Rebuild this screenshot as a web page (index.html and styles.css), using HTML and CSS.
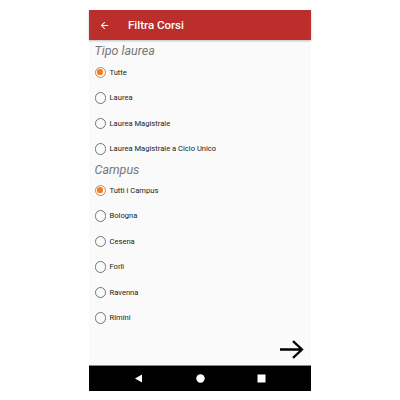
FILE: index.html
```html
<!DOCTYPE html>
<html>
<head>
<meta charset="utf-8">
<link rel="stylesheet" href="styles.css">
</head>
<body>
<div class="phone">
  <header class="appbar">
    <svg class="back" width="11" height="11" viewBox="0 0 24 24"><path d="M20 11H7.83l5.59-5.59L12 4l-8 8 8 8 1.41-1.41L7.83 13H20v-2z" fill="#fff"/></svg>
    <span class="title">Filtra Corsi</span>
  </header>
  <main class="content">
    <div class="section first">Tipo laurea</div>
    <div class="row"><span class="radio on"></span><span class="label">Tutte</span></div>
    <div class="row"><span class="radio"></span><span class="label">Laurea</span></div>
    <div class="row"><span class="radio"></span><span class="label">Laurea Magistrale</span></div>
    <div class="row"><span class="radio"></span><span class="label">Laurea Magistrale a Ciclo Unico</span></div>
    <div class="section">Campus</div>
    <div class="row"><span class="radio on"></span><span class="label">Tutti i Campus</span></div>
    <div class="row"><span class="radio"></span><span class="label">Bologna</span></div>
    <div class="row"><span class="radio"></span><span class="label">Cesena</span></div>
    <div class="row"><span class="radio"></span><span class="label">Forlì</span></div>
    <div class="row"><span class="radio"></span><span class="label">Ravenna</span></div>
    <div class="row"><span class="radio"></span><span class="label">Rimini</span></div>
    <svg class="next" width="25" height="19" viewBox="0 0 25 19"><path d="M1 9.5H23M14 1.2L23 9.5L14 17.8" fill="none" stroke="#000" stroke-width="2.3"/></svg>
  </main>
  <nav class="navbar">
    <svg width="9" height="9" viewBox="0 0 9 9"><path d="M8 0.5V8.5L1 4.5Z" fill="#fff"/></svg>
    <svg width="9" height="9" viewBox="0 0 9 9"><circle cx="4.5" cy="4.5" r="4.2" fill="#fff"/></svg>
    <svg width="9" height="9" viewBox="0 0 9 9"><rect x="0.5" y="0.5" width="8" height="8" fill="#fff"/></svg>
  </nav>
</div>
</body>
</html>
```
FILE: styles.css
```css
* { box-sizing: border-box; }
html, body { margin: 0; padding: 0; background: #fff; }
body { font-family: Roboto, "Liberation Sans", sans-serif; }
.phone {
  margin: 10px 0 0 89px;
  width: 222px;
  height: 381px;
  display: flex;
  flex-direction: column;
  background: #fafafa;
}
.appbar {
  height: 30px;
  background: #bb2e2b;
  display: flex;
  align-items: center;
  padding-left: 10px;
  box-shadow: 0 1px 2px rgba(0,0,0,0.25);
  position: relative;
  z-index: 1;
  flex: none;
}
.back { flex: none; }
.title {
  color: #fff;
  font-size: 11.5px;
  font-weight: 500;
  margin-left: 18px;
}
.content {
  flex: 1;
  position: relative;
  padding-left: 5.5px;
}
.section {
  height: 16px;
  line-height: 16px;
  font-size: 12.5px;
  font-style: italic;
  color: #777;
}
.section.first { margin-top: 3px; height: 16.5px; }
.row {
  height: 25.5px;
  display: flex;
  align-items: center;
}
.radio {
  width: 11.5px;
  height: 11.5px;
  border: 1.3px solid #757575;
  border-radius: 50%;
  position: relative;
  flex: none;
}
.radio.on { border-color: #f47b20; }
.radio.on::after {
  content: "";
  position: absolute;
  left: 1.6px; top: 1.6px;
  width: 5.7px; height: 5.7px;
  border-radius: 50%;
  background: #f47b20;
}
.label {
  margin-left: 3.5px;
  font-size: 7.6px;
  font-weight: 400;
  color: #222;
}
.next {
  position: absolute;
  right: 7px;
  bottom: 6px;
}
.navbar {
  height: 26px;
  background: #000;
  border-top: 1px solid #888;
  display: flex;
  align-items: center;
  justify-content: space-between;
  padding: 0 45px 0 45px;
  flex: none;
}
```
